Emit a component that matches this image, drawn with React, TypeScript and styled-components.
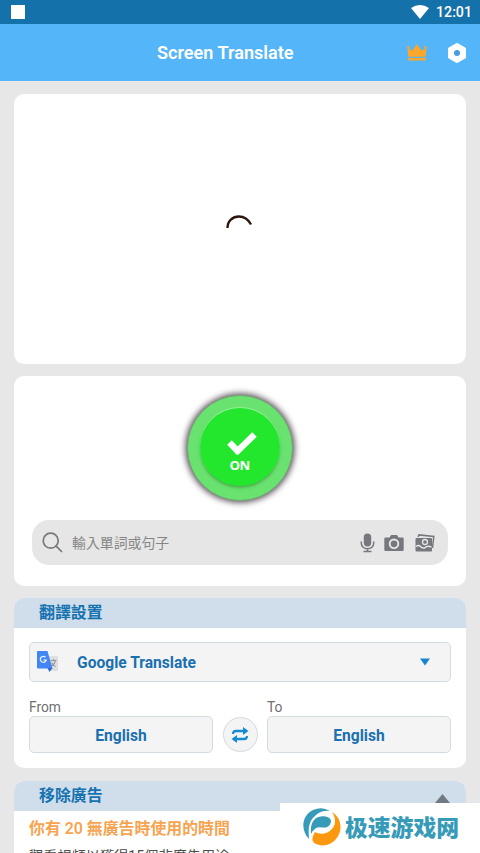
import React from "react";
import styled, { createGlobalStyle } from "styled-components";

const GlobalStyle = createGlobalStyle`
  *, *::before, *::after { box-sizing: border-box; }
  html, body { margin: 0; padding: 0; overflow: hidden; }
  body { background: #e7e7e7; font-family: Roboto, "Noto Sans CJK TC", sans-serif; }
  svg { display: block; flex: none; }
  button { font-family: inherit; padding: 0; margin: 0; }
`;

const Screen = styled.div`
  position: relative;
  width: 480px;
  height: 853px;
  overflow: hidden;
  display: flex;
  flex-direction: column;
  background: #e7e7e7;
`;

const StatusBar = styled.div`
  flex: none;
  height: 24px;
  padding: 0 8px 0 11px;
  display: flex;
  align-items: center;
  justify-content: space-between;
  background: #1571aa;
  color: #fff;
`;

const Notification = styled.div`
  width: 14px;
  height: 14px;
  background: #fff;
`;

const StatusRight = styled.div`
  display: flex;
  align-items: center;
  gap: 7px;
  font-size: 14.2px;
  font-weight: 500;
  line-height: 24px;
`;

const TitleBar = styled.header`
  flex: none;
  height: 57px;
  padding: 0 13px 0 70px;
  display: grid;
  grid-template-columns: 1fr 20px 20px;
  column-gap: 20px;
  align-items: center;
  background: #54b5f8;
  color: #fff;
`;

const Title = styled.h1`
  margin: 0;
  padding: 1px 0 0 87px;
  font-size: 18.1px;
  font-weight: 600;
  line-height: 24px;
  white-space: nowrap;
`;

const Content = styled.main`
  flex: none;
  padding: 12.5px 14px 0;
  display: flex;
  flex-direction: column;
  gap: 12.5px;
`;

const Card = styled.section<{ $height: number }>`
  flex: none;
  height: ${(p) => p.$height}px;
  border-radius: 10px;
  overflow: hidden;
  background: #fff;
`;

const LoadingCard = styled(Card)`
  display: flex;
  justify-content: center;
  padding: 118px 2px 0 0;
`;

const PowerCard = styled(Card)`
  display: flex;
  flex-direction: column;
  align-items: center;
  padding-top: 19px;
`;

const PowerButton = styled.button`
  flex: none;
  width: 106px;
  height: 106px;
  margin-right: 1px;
  border: 1px solid #71a871;
  border-radius: 50%;
  display: grid;
  place-items: center;
  background: #69e26f;
  box-shadow: 0 0 6px 1.5px #554a55;
`;

const PowerFace = styled.span`
  width: 80px;
  height: 78px;
  margin-top: -2px;
  padding-top: 23px;
  border-radius: 50%;
  display: flex;
  flex-direction: column;
  align-items: center;
  gap: 2px;
  background: #22e72c;
  box-shadow: 0 -1px 1px #98ef9b, 0 2px 3px #4eae51;
  color: #fff;
  font-family: "Open Sans", sans-serif;
  font-size: 13.2px;
  font-weight: 700;
  letter-spacing: -0.5px;
  line-height: 17px;

  svg { margin-left: 4px; }
`;

const SearchField = styled.div`
  flex: none;
  width: 416px;
  height: 45px;
  margin-top: 19px;
  padding: 0 13px 0 10px;
  border-radius: 17px;
  display: flex;
  align-items: center;
  background: #e6e6e6;
  color: #77787d;
`;

const Placeholder = styled.span`
  flex: 1;
  padding-left: 9px;
  color: #858585;
  font-size: 13.9px;
  line-height: 20px;
`;

const SearchActions = styled.div`
  display: grid;
  grid-template-columns: 15px 20px 20px;
  column-gap: 10px;
  align-items: center;

  svg:nth-child(2) { margin-left: -1px; }
`;

const SectionHeader = styled.h2<{ $height: number }>`
  margin: 0;
  height: ${(p) => p.$height}px;
  padding: 1px 16px 0 25px;
  display: flex;
  align-items: center;
  justify-content: space-between;
  background: #cfdeea;
  color: #1672b0;
  font-size: 15.9px;
  font-weight: 700;
  line-height: 22px;

  svg { margin-top: 5px; }
`;

const SectionBody = styled.div`
  padding: 14.5px 15px 0;
`;

const Control = styled.button<{ $height: number }>`
  width: 100%;
  height: ${(p) => p.$height}px;
  padding-top: 2px;
  border: 1px solid #d3dbe1;
  border-radius: 5px;
  display: flex;
  align-items: center;
  justify-content: center;
  background: #f4f4f4;
  color: #1a70b0;
  font-size: 15.6px;
  font-weight: 700;
`;

const EngineSelect = styled(Control)`
  padding: 0 20px 0 7px;
`;

const EngineName = styled.span`
  flex: 1;
  padding: 2px 0 0 18px;
  text-align: left;
`;

const Languages = styled.div`
  margin-top: 16px;
  display: grid;
  grid-template-columns: 184px 35px 184px;
  justify-content: space-between;
  align-items: end;
`;

const Label = styled.div`
  height: 18px;
  color: #707070;
  font-size: 13.8px;
  line-height: 18px;
`;

const SwapButton = styled.button`
  width: 35px;
  height: 35px;
  margin-bottom: 1px;
  border: 1px solid #d0d8e0;
  border-radius: 50%;
  display: grid;
  place-items: center;
  background: #f4f4f4;
  color: #168bd2;
`;

const AdsBody = styled.div`
  padding: 7.5px 15px 0;
  white-space: nowrap;
`;

const AdsRemaining = styled.div`
  color: #f8a350;
  font-size: 15.9px;
  font-weight: 600;
  line-height: 22px;
`;

const AdsHint = styled.div`
  margin-top: 5.5px;
  color: #4d4d4d;
  font-size: 14.2px;
  line-height: 20px;
`;

const SiteBadge = styled.div`
  position: absolute;
  right: 0;
  bottom: 0;
  width: 200px;
  height: 50px;
  padding: 0 0 2px 22px;
  display: flex;
  align-items: center;
  gap: 3px;
  background: #fff;
  color: #369bb8;
  font-family: "Noto Sans CJK SC", sans-serif;
  font-size: 22.8px;
  font-weight: 900;
  line-height: 32px;
  white-space: nowrap;
`;

const WifiIcon = () => (
  <svg width="18" height="14" viewBox="0 0 18 14" fill="#fff">
    <path d="M0 3Q9-3 18 3L9 14Z" />
  </svg>
);

const CrownIcon = () => (
  <svg width="20" height="18" viewBox="0 0 20 18" fill="#f9a72d">
    <path d="M.5 3.500 5 6.500 10 .8l5 5.700 4.500-3-.7 9.300H1.200Z" />
    <circle cx="10" cy="2" r="1.500" />
    <circle cx="1.400" cy="3.300" r="1.200" />
    <circle cx="18.600" cy="3.300" r="1.200" />
    <path d="M1.200 13.900h17.600v2.600H1.200Z" />
  </svg>
);

const NutIcon = () => (
  <svg width="20" height="20" viewBox="0 0 20 20">
    <path d="m10 1.500 7.500 4.200v8.600L10 18.500l-7.500-4.200V5.700Z" fill="#fff" stroke="#fff" strokeWidth="3" strokeLinejoin="round" />
    <circle cx="10" cy="10" r="3" fill="#479fdc" />
  </svg>
);

const Spinner = () => (
  <svg width="30" height="22" viewBox="0 0 30 22" fill="none">
    <path d="M3.500 16C3.500 9 8.500 4.500 15 4.500c5 0 9 2.500 12 8" stroke="#2d160d" strokeWidth="2.400" />
  </svg>
);

const CheckIcon = () => (
  <svg width="32" height="24" viewBox="0 0 32 24" fill="none">
    <path d="m3.500 11.500 8 8.500L28.500 3.500" stroke="#fff" strokeWidth="6.400" />
  </svg>
);

const SearchIcon = () => (
  <svg width="21" height="21" viewBox="0 0 21 21" fill="none" stroke="#78787a" strokeWidth="1.700" strokeLinecap="round">
    <circle cx="8.700" cy="8.700" r="7.500" />
    <path d="m14.200 14.200 5.300 5.300" />
  </svg>
);

const MicIcon = () => (
  <svg width="15" height="20" viewBox="0 0 15 20">
    <rect x="3.800" y="0.500" width="7.400" height="13" rx="3.700" fill="currentColor" />
    <path d="M1.300 8.500v1.800a6.200 5.500 0 0 0 12.400 0V8.500M7.500 15.500v3M3.500 18.500h8" fill="none" stroke="currentColor" strokeWidth="1.500" />
  </svg>
);

const CameraIcon = () => (
  <svg width="20" height="18" viewBox="0 0 20 18">
    <path d="M1.500 3.500h4L7 1h6l1.500 2.500h4q1.200 0 1.200 1.200v11q0 1.300-1.200 1.300h-17Q.3 17 .3 15.700v-11Q.3 3.500 1.500 3.500Z" fill="currentColor" />
    <circle cx="10" cy="9.800" r="4.300" fill="currentColor" stroke="#e6e6e6" strokeWidth="1.900" />
  </svg>
);

const GalleryIcon = () => (
  <svg width="20" height="18" viewBox="0 0 20 18">
    <path d="M3 2.800 4 .9l14.800 1.600L17.500 14" fill="none" stroke="currentColor" strokeWidth="1.500" />
    <rect x=".5" y="4" width="16.500" height="13.500" rx="1" fill="currentColor" />
    <circle cx="10" cy="8" r="2.500" fill="none" stroke="#e6e6e6" strokeWidth="1.300" />
    <path d="M1 12.500q2.500-2 4.500 0t4.500 1.200q2.500-2.500 6.500-.5" fill="none" stroke="#e6e6e6" strokeWidth="1.500" />
  </svg>
);

const TranslateIcon = () => (
  <svg width="22" height="22" viewBox="0 0 22 22">
    <path d="M9 5h11q1 0 1 1v13q0 1-1 1h-8Z" fill="#dedfe0" />
    <path d="M13.500 9.500h6m-3-1.500v1.500m2 0q-1 4-5 6m1-4q2 3 4 4" fill="none" stroke="#96999c" strokeWidth="1.100" />
    <path d="M1 0h9.500L15.500 17.500H1Q0 17.500 0 16.500V1Q0 0 1 0Z" fill="#4285f4" />
    <path d="M10.500 17h5L12.500 21Z" fill="#2c66d8" />
    <path d="M8.500 6.200a3 3 0 1 0 .7 3H6.500" fill="none" stroke="#e6efff" strokeWidth="1.300" />
  </svg>
);

const TriangleDown = () => (
  <svg width="10" height="8" viewBox="0 0 10 8" fill="#1685d0">
    <path d="M0 .5h10L5 7.500Z" />
  </svg>
);

const TriangleUp = () => (
  <svg width="15" height="9" viewBox="0 0 15 9" fill="#717a82">
    <path d="M7.500 0 15 9H0Z" />
  </svg>
);

const SwapIcon = () => (
  <svg width="18" height="18" viewBox="0 0 18 18" fill="currentColor">
    <path d="M1 8Q1 3.800 5 3.800h7V1L17.500 5 12 9V6.300H5Q3 6.300 3 8ZM17 10q0 4.200-4 4.200H6V17L.5 13 6 9v2.700h7q2 0 2-1.700Z" />
  </svg>
);

const SiteLogo = () => (
  <svg width="40" height="40" viewBox="0 0 40 40">
    <path d="M7 32C-2 23 0 8 11 3q9-4 17 1-8-1-14 4C7 14 6 20 7 32Z" fill="#369bb8" />
    <path d="M30 5c10 6 11 19 4 27-5 6-13 8-20 5-4-2-4-5-3-8l2-4c5 3 13 2 17-3 4-5 4-11 0-17Z" fill="#fb980e" />
    <path d="M9 27C8 18 11 10 19 9.500c8-1 12 3 9 8-4 6-9 1-14 3.500q-3 2-5 6Z" fill="#369bb8" />
  </svg>
);

export default function App() {
  return (
    <>
      <GlobalStyle />
      <Screen>
        <StatusBar>
          <Notification />
          <StatusRight>
            <WifiIcon />
            <span>12:01</span>
          </StatusRight>
        </StatusBar>
        <TitleBar>
          <Title>Screen Translate</Title>
          <CrownIcon />
          <NutIcon />
        </TitleBar>
        <Content>
          <LoadingCard $height={270}>
            <Spinner />
          </LoadingCard>
          <PowerCard $height={209.5}>
            <PowerButton>
              <PowerFace>
                <CheckIcon />
                ON
              </PowerFace>
            </PowerButton>
            <SearchField>
              <SearchIcon />
              <Placeholder>輸入單詞或句子</Placeholder>
              <SearchActions>
                <MicIcon />
                <CameraIcon />
                <GalleryIcon />
              </SearchActions>
            </SearchField>
          </PowerCard>
          <Card $height={170}>
            <SectionHeader $height={29.5}>翻譯設置</SectionHeader>
            <SectionBody>
              <EngineSelect $height={40}>
                <TranslateIcon />
                <EngineName>Google Translate</EngineName>
                <TriangleDown />
              </EngineSelect>
              <Languages>
                <div>
                  <Label>From</Label>
                  <Control $height={37}>English</Control>
                </div>
                <SwapButton>
                  <SwapIcon />
                </SwapButton>
                <div>
                  <Label>To</Label>
                  <Control $height={37}>English</Control>
                </div>
              </Languages>
            </SectionBody>
          </Card>
          <Card $height={120}>
            <SectionHeader $height={30}>
              移除廣告
              <TriangleUp />
            </SectionHeader>
            <AdsBody>
              <AdsRemaining>你有 20 無廣告時使用的時間</AdsRemaining>
              <AdsHint>觀看視頻以獲得15個非廣告用途:</AdsHint>
            </AdsBody>
          </Card>
        </Content>
        <SiteBadge>
          <SiteLogo />
          极速游戏网
        </SiteBadge>
      </Screen>
    </>
  );
}
